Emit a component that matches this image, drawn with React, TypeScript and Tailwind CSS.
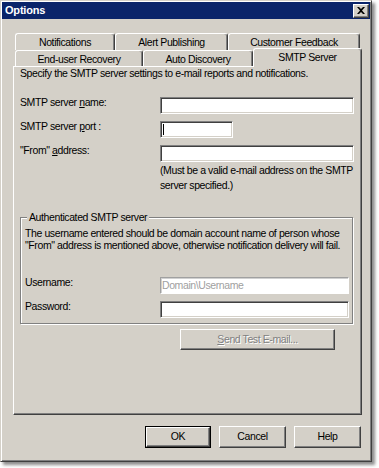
import React from "react";

const font = { fontFamily: '"Liberation Sans", Arial, sans-serif' };

const sunken =
  "border border-t-[#808080] border-l-[#808080] border-b-white border-r-white shadow-[inset_1px_1px_#404040,inset_-1px_-1px_#d4d0c8] bg-white";

const raised =
  "border border-t-white border-l-white border-b-[#404040] border-r-[#404040] shadow-[inset_-1px_-1px_#808080] bg-[#d4d0c8]";

function Tab({ label, w, className = "" }: { label: string; w: string; className?: string }) {
  return (
    <div
      className={`${w} ${className} flex items-start justify-center pt-[2px] border-t border-l border-r border-t-white border-l-white border-r-[#404040] shadow-[inset_-1px_0_#808080] rounded-t-[3px] bg-[#d4d0c8] leading-[13px] text-black whitespace-nowrap`}
    >
      {label}
    </div>
  );
}

function Button({ children, w, isDefault = false, disabled = false }: { children: React.ReactNode; w: string; isDefault?: boolean; disabled?: boolean }) {
  if (isDefault) {
    return (
      <div className={`${w} h-[22px] border border-black`}>
        <div className={`${raised} w-full h-full flex items-center justify-center text-black`}>{children}</div>
      </div>
    );
  }
  return (
    <div
      className={`${w} ${raised} flex items-center justify-center whitespace-nowrap ${disabled ? "text-[#808080] [text-shadow:1px_1px_0_#ffffff]" : "text-black"}`}
    >
      {children}
    </div>
  );
}

export default function App() {
  return (
    <div className="w-[379px] h-[468px] bg-white text-[10.5px] tracking-[-0.4px]" style={font}>
      <div className="w-[372px] h-[462px] bg-[#d4d0c8] border border-t-[#d4d0c8] border-l-[#d4d0c8] border-b-[#404040] border-r-[#404040] shadow-[inset_1px_1px_#ffffff,inset_-1px_-1px_#808080,3px_3px_3px_rgba(0,0,0,0.45)] p-[1px] flex flex-col">
        {/* Title bar */}
        <div className="h-[17px] bg-[#0a246a] flex items-center justify-between pl-[3px] pr-[1px]">
          <span className="text-white font-bold text-[11px] leading-[13px] tracking-[-0.2px]">Options</span>
          <div className={`w-[16px] h-[14px] ${raised} flex items-center justify-center`}>
            <svg width="8" height="7" viewBox="0 0 8 7">
              <path d="M0 0 L2 0 L4 2 L6 0 L8 0 L5 3.5 L8 7 L6 7 L4 5 L2 7 L0 7 L3 3.5 Z" fill="#000" />
            </svg>
          </div>
        </div>

        <div className="ml-[11px] w-[349px] flex flex-col">
          {/* Tabs */}
          <div className="mt-[14px] h-[17px] flex pl-[2px]">
            <Tab label="Notifications" w="w-[100px]" />
            <Tab label="Alert Publishing" w="w-[113px]" />
            <Tab label="Customer Feedback" w="w-[132px]" />
          </div>
          <div className="-mt-[2px] h-[18px] flex items-end pl-[2px] relative z-10">
            <Tab label="End-user Recovery" w="w-[128px]" className="h-[16px]" />
            <Tab label="Auto Discovery" w="w-[110px]" className="h-[16px]" />
            <Tab label="SMTP Server" w="w-[109px]" className="h-[19px] -mb-[1px] relative z-10" />
          </div>

          {/* Panel */}
          <div className="h-[349px] border border-t-white border-l-white border-b-[#404040] border-r-[#404040] shadow-[inset_-1px_-1px_#808080] pl-[6px] flex flex-col text-black whitespace-nowrap">
            <div className="leading-[13px]">Specify the SMTP server settings to e-mail reports and notifications.</div>

            <div className="mt-[17px] flex">
              <div className="w-[140px] leading-[11px]">
                SMTP server <u>n</u>ame:
              </div>
              <div className={`w-[194px] h-[17px] ${sunken}`} />
            </div>
            <div className="mt-[7px] flex">
              <div className="w-[140px] leading-[11px]">
                SMTP server <u>p</u>ort :
              </div>
              <div className={`w-[73px] h-[17px] ${sunken} flex items-center pl-[2px]`}>
                <div className="w-[1px] h-[11px] bg-black" />
              </div>
            </div>
            <div className="mt-[7px] flex">
              <div className="w-[140px] leading-[11px]">
                "From" <u>a</u>ddress:
              </div>
              <div className={`w-[194px] h-[17px] ${sunken}`} />
            </div>
            <div className="ml-[140px] mt-[1px] leading-[15px]">
              (Must be a valid e-mail address on the SMTP
              <br />
              server specified.)
            </div>

            {/* Group box */}
            <div className="mt-[24px] w-[333px] h-[107px] border border-[#808080] shadow-[inset_1px_1px_#ffffff,1px_1px_#ffffff] relative pl-[4px] pt-[9px] flex flex-col">
              <div className="absolute -top-[7px] left-[6px] px-[2px] bg-[#d4d0c8] leading-[13px]">Authenticated SMTP server</div>
              <div className="leading-[12px]">
                The username entered should be domain account name of person whose
                <br />
                "From" address is mentioned above, otherwise notification delivery will fail.
              </div>
              <div className="mt-[26px] flex">
                <div className="w-[135px] leading-[11px]">Username:</div>
                <div className="w-[189px] h-[17px] bg-white border border-t-[#a0a0a0] border-l-[#a0a0a0] border-b-white border-r-white shadow-[inset_1px_1px_#d0d0d0] text-[#a0a0a0] leading-[15px] pl-[1px]">
                  Domain\Username
                </div>
              </div>
              <div className="mt-[7px] flex">
                <div className="w-[135px] leading-[11px]">Password:</div>
                <div className={`w-[189px] h-[17px] ${sunken}`} />
              </div>
            </div>

            <div className="mt-[5px] ml-[160px] flex">
              <Button w="w-[155px] h-[21px]" disabled>
                <span>
                  <u>S</u>end Test E-mail...
                </span>
              </Button>
            </div>
          </div>

          {/* Bottom buttons */}
          <div className="mt-[11px] flex justify-end gap-[8px] pr-[1px]">
            <Button w="w-[66px]" isDefault>
              OK
            </Button>
            <Button w="w-[67px] h-[22px]">Cancel</Button>
            <Button w="w-[67px] h-[22px]">Help</Button>
          </div>
        </div>
      </div>
    </div>
  );
}
